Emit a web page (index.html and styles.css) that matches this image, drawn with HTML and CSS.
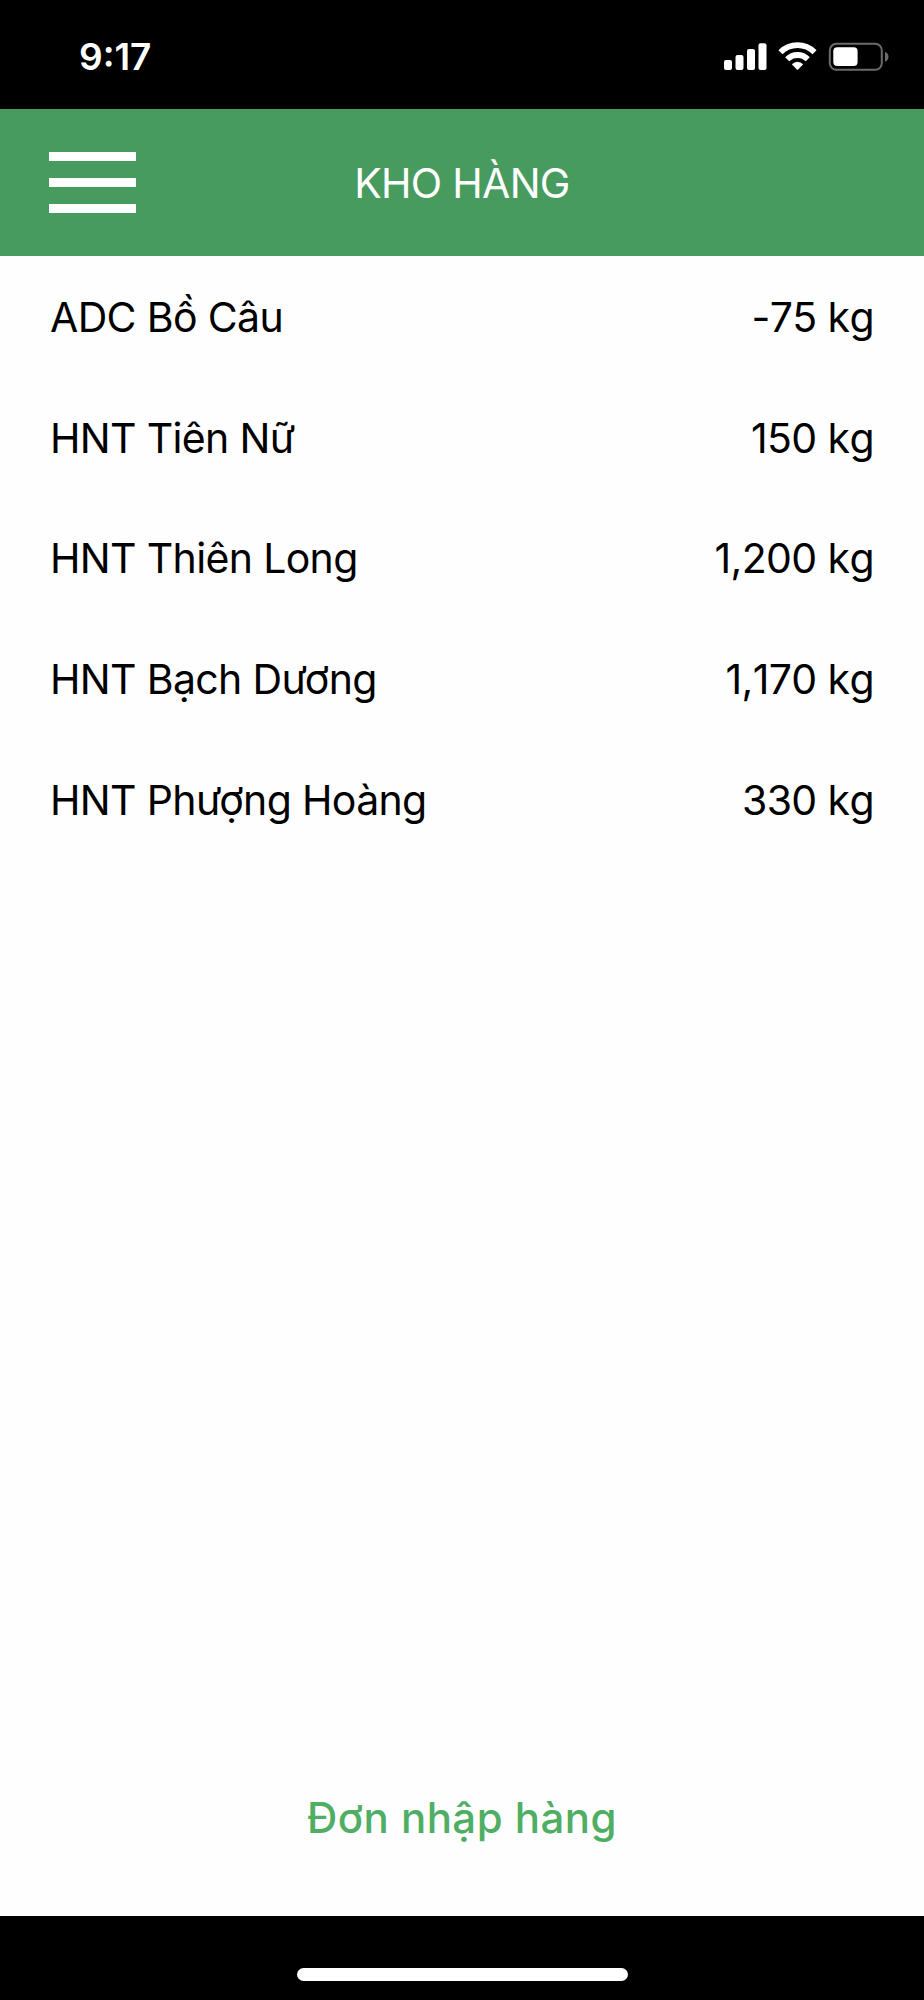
FILE: index.html
```
<!DOCTYPE html>
<html lang="vi">
<head>
  <meta charset="UTF-8">
  <title>Kho hàng</title>
  <meta name="viewport" content="width=device-width, initial-scale=1">
  <link rel="stylesheet" href="styles.css">
</head>
<body>

  <div class="status-bar">
    <span class="time">9:17</span>
    <svg class="status-icons" width="166" height="30" viewBox="0 0 166 30" fill="#fff">
      <!-- signal -->
      <rect x="0" y="18" width="8" height="10" rx="2"/>
      <rect x="11.5" y="13" width="8" height="15" rx="2"/>
      <rect x="23" y="7" width="8" height="21" rx="2"/>
      <rect x="34.5" y="1.3" width="8" height="26.7" rx="2"/>
      <!-- wifi -->
      <g fill="none" stroke="#fff" stroke-width="5.8">
        <path d="M56.5 10.2 A24 24 0 0 1 90.5 10.2"/>
        <path d="M63.2 17.3 A14.5 14.5 0 0 1 83.8 17.3"/>
      </g>
      <path d="M67.8 22.3 Q73.5 17.3 79.2 22.3 L74.2 27.5 Q73.5 28.2 72.8 27.5 Z"/>
      <!-- battery -->
      <rect x="105.8" y="1.8" width="52" height="26" rx="6.5" fill="none" stroke="#6b6b6b" stroke-width="2"/>
      <rect x="109.3" y="5.3" width="24.3" height="18.7" rx="4"/>
      <path d="M161 9.8 Q164.5 11.3 164.5 14.8 T161 19.8 Z" fill="#6b6b6b"/>
    </svg>
  </div>

  <header>
    <button class="menu-btn" aria-label="Menu">
      <span></span>
      <span></span>
      <span></span>
    </button>
    <h1>KHO HÀNG</h1>
  </header>

  <main>
    <ul class="stock-list">
      <li><span class="name">ADC Bồ Câu</span><span class="qty">-75 kg</span></li>
      <li><span class="name">HNT Tiên Nữ</span><span class="qty">150 kg</span></li>
      <li><span class="name">HNT Thiên Long</span><span class="qty">1,200 kg</span></li>
      <li><span class="name">HNT Bạch Dương</span><span class="qty">1,170 kg</span></li>
      <li><span class="name">HNT Phượng Hoàng</span><span class="qty">330 kg</span></li>
    </ul>
    <a class="import-link">Đơn nhập hàng</a>
  </main>

  <div class="home-area">
    <div class="home-bar"></div>
  </div>

</body>
</html>
```
FILE: styles.css
```
:root {
  --primary: #489b5f;
  --accent: #4fae64;
  --white: #ffffff;
}

* { box-sizing: border-box; }

body {
  margin: 0;
  height: 2000px;
  display: flex;
  flex-direction: column;
  font-family: Inter, 'Noto Sans', sans-serif;
  font-size: 41px;
  background-color: #fefefe;
  color: #000;
}

.status-bar {
  display: flex;
  justify-content: space-between;
  align-items: flex-start;
  height: 108.5px;
  padding: 34px 34px 0 79px;
  background-color: #000;
  color: var(--white);
}

.time {
  font-size: 37px;
  font-weight: 600;
  line-height: 46px;
}

.status-icons {
  display: block;
  margin-top: 8px;
}

header {
  display: grid;
  grid-template-columns: 87px 1fr 87px;
  align-items: center;
  height: 147.7px;
  padding: 0 49px;
  background-color: var(--primary);
  color: var(--white);
}

.menu-btn {
  display: flex;
  flex-direction: column;
  gap: 17px;
  padding: 0;
  border: none;
  background: none;
}

.menu-btn span {
  width: 87px;
  height: 9px;
  background-color: var(--white);
}

h1 {
  margin: 0;
  padding-top: 1px;
  font-size: 41px;
  font-weight: 400;
  letter-spacing: -0.7px;
  text-align: center;
}

main {
  flex: 1;
  display: flex;
  flex-direction: column;
  justify-content: space-between;
  align-items: center;
}

.stock-list {
  width: 100%;
  margin: 0;
  padding: 0.5px 50px 0;
  list-style: none;
}

.stock-list li {
  display: flex;
  justify-content: space-between;
  align-items: center;
  height: 120.7px;
}

.name {
  letter-spacing: -0.65px;
}

.qty {
  letter-spacing: -0.6px;
  font-kerning: none;
}

.import-link {
  padding-bottom: 72px;
  font-size: 42px;
  font-weight: 500;
  line-height: 52px;
  letter-spacing: 0.45px;
  color: var(--accent);
}

.home-area {
  display: flex;
  justify-content: center;
  height: 84px;
  padding-top: 52px;
  background-color: #000;
}

.home-bar {
  width: 331px;
  height: 12.5px;
  border-radius: 7px;
  background-color: var(--white);
}
```
